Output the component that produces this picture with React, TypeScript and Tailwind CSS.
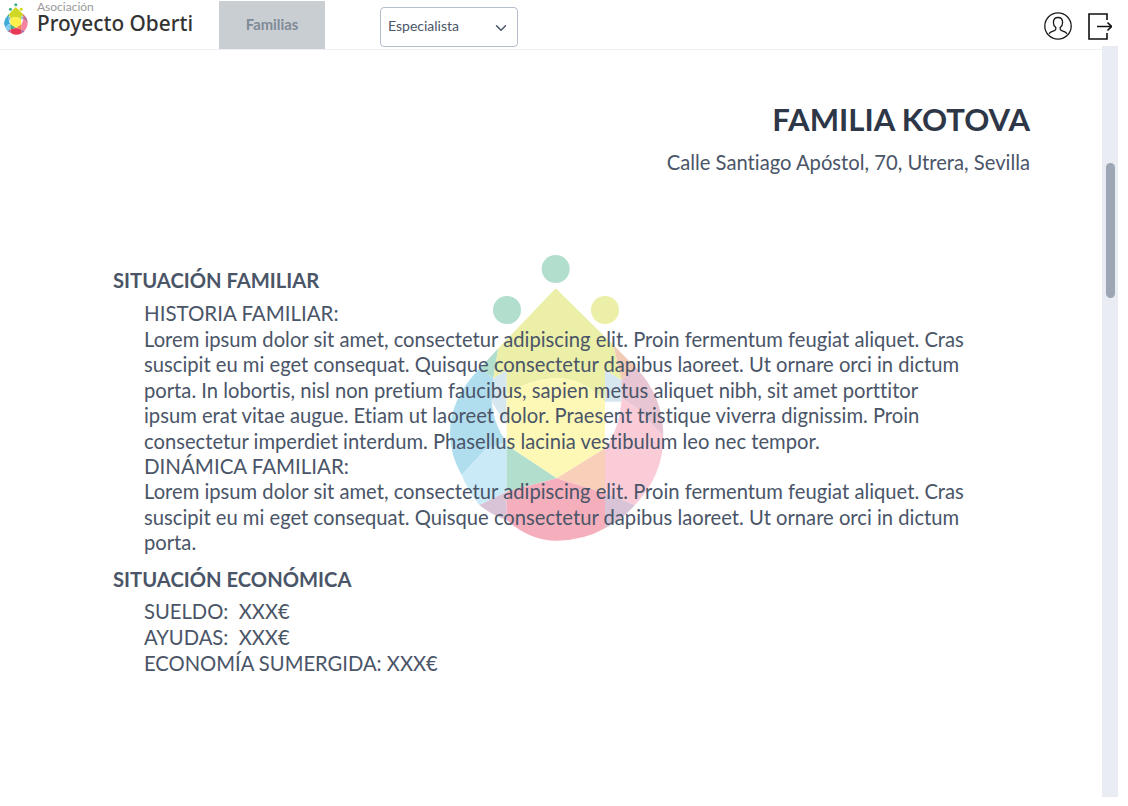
import React from 'react';
import { ChevronDown } from 'lucide-react';

const lato = { fontFamily: 'Lato, sans-serif' };

function Logo({ className }: { className?: string }) {
  return (
    <svg viewBox="0 0 705 915" className={className}>
      <circle cx="347" cy="72" r="42" fill="#41af87" />
      <circle cx="201" cy="195" r="42" fill="#41af87" />
      <circle cx="495" cy="195" r="42" fill="#cfd925" />
      <path d="M120 370 Q30 460 30 565 Q30 630 65 690 L135 615 L200 590 Q160 540 155 470 L160 400 Z" fill="#3fadd8" />
      <path d="M65 690 L135 615 L200 590 L200 740 L118 780 Q85 740 65 690 Z" fill="#7fcdf0" />
      <path d="M120 370 L175 310 L160 400 Z" fill="#41af87" />
      <path d="M160 400 L200 375 L200 540 L155 470 Z" fill="#9ac4da" />
      <path d="M347 130 L520 300 L545 405 L495 375 L495 470 Q430 400 350 400 Q270 400 200 450 L200 375 L160 400 L175 310 Z" fill="#cfd925" />
      <path d="M200 450 Q270 400 350 400 Q430 400 495 470 L495 610 L350 700 L200 600 Z" fill="#fdf04a" />
      <path d="M520 300 L585 365 L545 405 Z" fill="#e07f4a" />
      <path d="M495 375 L545 405 L545 470 L495 470 Z" fill="#9ac4da" />
      <path d="M545 405 L585 365 Q670 450 670 575 L590 490 L545 460 Z" fill="#c46f90" />
      <path d="M545 460 L590 490 L670 575 Q670 690 585 780 L495 745 L495 610 Q540 550 545 460 Z" fill="#f482a0" />
      <path d="M350 700 L495 610 L495 745 Z" fill="#ee8a50" />
      <path d="M200 600 L350 700 L200 740 Z" fill="#41af87" />
      <path d="M118 780 L200 740 L200 825 Q155 810 118 780 Z" fill="#a06e9a" />
      <path d="M495 745 L585 780 Q545 825 495 850 Z" fill="#a06e9a" />
      <path d="M200 740 L350 700 L495 745 L495 850 Q430 887 350 887 Q270 887 200 825 Z" fill="#e83858" />
    </svg>
  );
}

function UserIcon() {
  return (
    <svg viewBox="0 0 28 28" className="h-7 w-7" fill="none" stroke="#1a1a1a" strokeWidth="1.3">
      <circle cx="14" cy="14" r="13.2" />
      <path d="M14 5.5c-3 0-4.6 2.2-4.6 5 0 2.3 1 4 2.4 5v1.6c0 .8-.5 1.3-1.4 1.6l-3.2 1.2c-1 .4-1.7 1-2 2M14 5.5c3 0 4.6 2.2 4.6 5 0 2.3-1 4-2.4 5v1.6c0 .8.5 1.3 1.4 1.6l3.2 1.2c1 .4 1.7 1 2 2" />
    </svg>
  );
}

function LogoutIcon() {
  return (
    <svg viewBox="0 0 24 27" className="h-[27px] w-6" fill="none" stroke="#111" strokeWidth="1.6">
      <path d="M19 7V1H1v25h18v-6" />
      <path d="M9 13.5h14.5M19.5 9.5l4 4-4 4" />
    </svg>
  );
}

const lorem1 = [
  'Lorem ipsum dolor sit amet, consectetur adipiscing elit. Proin fermentum feugiat aliquet. Cras',
  'suscipit eu mi eget consequat. Quisque consectetur dapibus laoreet. Ut ornare orci in dictum',
  'porta. In lobortis, nisl non pretium faucibus, sapien metus aliquet nibh, sit amet porttitor',
  'ipsum erat vitae augue. Etiam ut laoreet dolor. Praesent tristique viverra dignissim. Proin',
  'consectetur imperdiet interdum. Phasellus lacinia vestibulum leo nec tempor.',
];

const lorem2 = [
  'Lorem ipsum dolor sit amet, consectetur adipiscing elit. Proin fermentum feugiat aliquet. Cras',
  'suscipit eu mi eget consequat. Quisque consectetur dapibus laoreet. Ut ornare orci in dictum',
  'porta.',
];

export default function App() {
  return (
    <div className="flex h-[806px] w-[1128px] flex-col overflow-hidden bg-white pr-[10px] [font-variant-ligatures:none]" style={lato}>
      <header className="flex h-[50px] shrink-0 items-start border-b border-[#eef0f6]">
        <div className="flex h-[49px] w-[219px] shrink-0 items-start pl-[3px]">
          <Logo className="mt-[2px] h-[34px] w-[26px]" />
          <div className="ml-[8px]">
            <div className="h-[13px] text-[12px] leading-[13px] text-[#999999]">Asociación</div>
            <div className="text-[20.8px] leading-[20px] font-medium text-[#333333]" style={{ fontFamily: '"Noto Sans", sans-serif' }}>Proyecto Oberti</div>
          </div>
        </div>
        <div className="mt-[1px] flex h-[48px] w-[106px] items-center justify-center bg-[#c9ced3] pb-[1px] text-[14.8px] font-bold text-[#7f8a96]">Familias</div>
        <div className="mt-[7px] ml-[55px] flex h-[40px] w-[138px] items-center justify-between rounded border border-[#b4bccd] pr-[7px] pb-[3px] pl-[7px] text-sm text-[#4a5568]">
          Especialista
          <ChevronDown className="mt-[4px] h-[18px] w-[18px]" strokeWidth={2} />
        </div>
        <div className="ml-auto flex items-center gap-[16px] pt-[12px] pr-[6px]">
          <UserIcon />
          <LogoutIcon />
        </div>
      </header>
      <div className="flex min-h-0 flex-1">
        <main className="relative min-w-0 flex-1 pr-[72px] pl-[113px] text-[#4a5568]">
          <Logo className="absolute top-[195px] left-[440px] h-[305px] w-[235px] opacity-40" />
          <div className="relative">
            <div className="pt-[49px] text-right">
              <h1 className="text-[31.1px] leading-[40px] font-bold text-[#2d3748]">FAMILIA KOTOVA</h1>
              <p className="mt-[10px] text-[20.2px] leading-[26px]">Calle Santiago Apóstol, 70, Utrera, Sevilla</p>
            </div>
            <section className="mt-[92px]">
              <h2 className="text-[20.2px] leading-[26px] font-bold">SITUACIÓN FAMILIAR</h2>
              <div className="mt-[8px] pl-[31px] text-[20.2px] leading-[25.6px] whitespace-nowrap">
                <div className="text-[20.5px]">HISTORIA FAMILIAR:</div>
                {lorem1.map((line) => <div key={line}>{line}</div>)}
                <div className="mt-[-1px] text-[20.5px]">DINÁMICA FAMILIAR:</div>
                {lorem2.map((line, i) => <div key={i}>{line}</div>)}
              </div>
            </section>
            <section className="mt-[10px]">
              <h2 className="text-[20.2px] leading-[26px] font-bold">SITUACIÓN ECONÓMICA</h2>
              <div className="mt-[6px] pl-[31px] text-[20.2px] leading-[26px]">
                <div>SUELDO:&nbsp; XXX€</div>
                <div>AYUDAS:&nbsp; XXX€</div>
                <div>ECONOMÍA SUMERGIDA: XXX€</div>
              </div>
            </section>
          </div>
        </main>
        <div className="mt-[-4px] mb-[9px] w-[16px] shrink-0 bg-[#e9ecf3] pt-[117px]">
          <div className="ml-[4px] h-[135px] w-[9px] rounded-full bg-[#9ca6b5]" />
        </div>
      </div>
    </div>
  );
}
